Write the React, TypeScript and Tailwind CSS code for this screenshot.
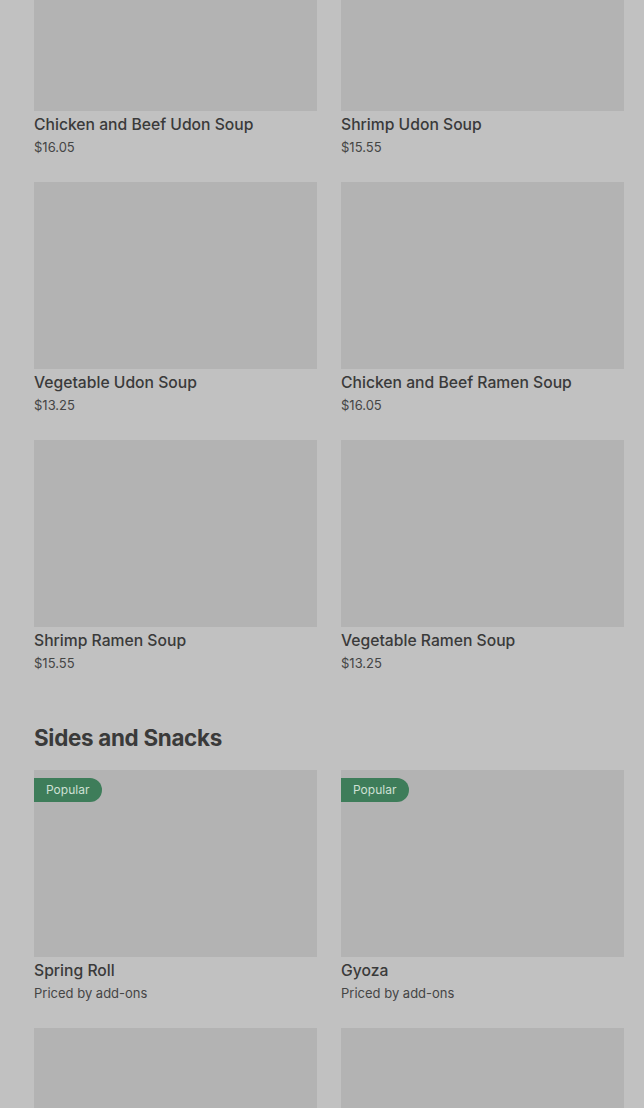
const SOUPS = [
  { name: "Chicken and Beef Udon Soup", price: "$16.05" },
  { name: "Shrimp Udon Soup", price: "$15.55" },
  { name: "Vegetable Udon Soup", price: "$13.25" },
  { name: "Chicken and Beef Ramen Soup", price: "$16.05" },
  { name: "Shrimp Ramen Soup", price: "$15.55" },
  { name: "Vegetable Ramen Soup", price: "$13.25" },
];

const SIDES = [
  { name: "Spring Roll", price: "Priced by add-ons", popular: true },
  { name: "Gyoza", price: "Priced by add-ons", popular: true },
  { name: "", price: "", popular: false },
  { name: "", price: "", popular: false },
];

type Item = { name: string; price: string; popular?: boolean };

function MenuCard({ item }: { item: Item }) {
  return (
    <div className="flex flex-col">
      <div className="relative h-[187px] bg-[#b3b3b3]">
        {item.popular && (
          <span className="absolute left-0 top-2 flex h-6 items-center rounded-r-full bg-[#3e7d5a] pl-3 pr-[13px] text-[12px] text-[#cfe0d5]">
            Popular
          </span>
        )}
      </div>
      <p className="mt-[3px] text-[15.7px] font-medium leading-[22px] text-[#3a3a3a]">{item.name}</p>
      <p className="text-[13px] leading-[23px] text-[#454545]">{item.price}</p>
    </div>
  );
}

export default function App() {
  return (
    <div
      className="h-[1108px] overflow-hidden bg-[#c1c1c1] pl-[34px] pr-5"
      style={{ fontFamily: "Inter, 'Noto Sans', sans-serif" }}
    >
      <div className="-mt-[76px] grid grid-cols-2 gap-x-6 gap-y-[23px]">
        {SOUPS.map((s) => (
          <MenuCard key={s.name} item={s} />
        ))}
      </div>

      <h2 className="mt-[47px] text-[22.4px] font-bold leading-[32px] tracking-[-0.3px] text-[#3a3a3a]">
        Sides and Snacks
      </h2>

      <div className="mt-[16px] grid grid-cols-2 gap-x-6 gap-y-[23px]">
        {SIDES.map((s, i) => (
          <MenuCard key={i} item={s} />
        ))}
      </div>
    </div>
  );
}
